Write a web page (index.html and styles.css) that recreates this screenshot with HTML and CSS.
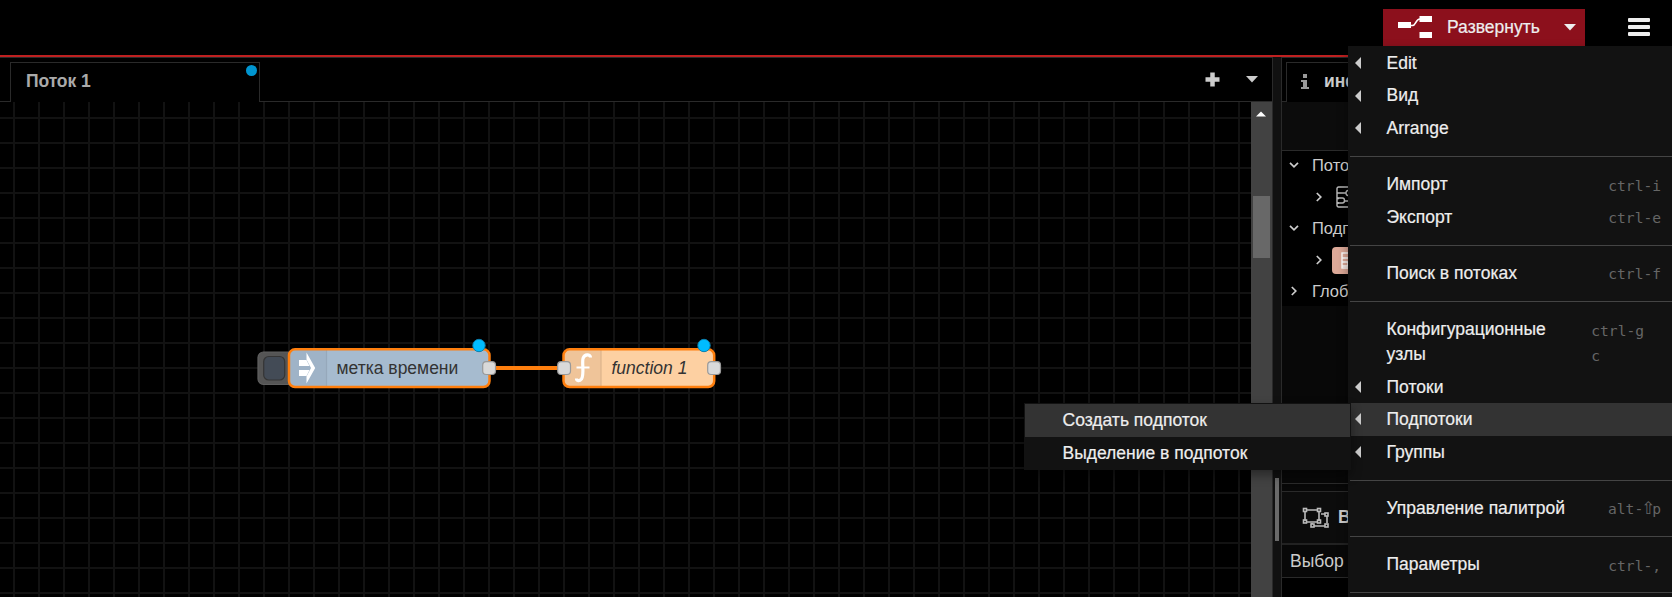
FILE: index.html
```html
<!DOCTYPE html>
<html lang="ru">
<head>
<meta charset="utf-8">
<title>Node-RED</title>
<link rel="stylesheet" href="styles.css">
</head>
<body>
<header class="header">
  <button class="deploy">
    <svg class="deploy-icon" width="34" height="23" viewBox="0 0 34 23"><g fill="#fff"><rect x="0" y="6" width="13" height="6"/><rect x="21.500" y="0" width="12.500" height="6"/><rect x="21.500" y="16" width="12.500" height="6"/></g><path d="M12 9.500h2.500C18 9.500 17.500 3 22 3" fill="none" stroke="#fff" stroke-width="1.600"/></svg>
    <span class="deploy-label">Развернуть</span>
    <svg class="deploy-caret" width="12" height="7"><path d="M0 0h12L6 6.500z" fill="#eee"/></svg>
  </button>
  <div class="burger"><i></i><i></i><i></i></div>
</header>
<main class="main">
  <section class="workspace">
    <div class="tabs">
      <div class="tab">Поток 1<span class="tab-dot"></span></div>
      <div class="tab-actions">
        <svg width="15" height="15"><path d="M7.500 .5v14M.5 7.500h14" stroke="#ccc" stroke-width="4.500"/></svg>
        <svg width="12" height="7"><path d="M0 0h12L6 6.500z" fill="#ccc"/></svg>
      </div>
    </div>
    <div class="canvas-row">
      <svg class="canvas" width="1251" height="495" viewBox="0 102 1251 495">
        <defs><pattern id="grid" x="13" y="117" width="25" height="25" patternUnits="userSpaceOnUse"><path d="M0 1h25M1 0v25" stroke="#121212" stroke-width="2"/></pattern></defs>
        <rect y="102" width="1251" height="495" fill="url(#grid)"/>
        <path d="M490 368h73" stroke="#ff7f0e" stroke-width="4"/>
        <g>
          <rect x="258" y="352" width="40" height="32.500" rx="5.500" fill="#555" stroke="#606060" stroke-width="1.200"/>
          <rect x="263.700" y="356.500" width="21" height="23.500" rx="5" fill="#434b56" stroke="#353535" stroke-width="1.200"/>
          <rect x="289" y="349.300" width="200.500" height="37.700" rx="6" fill="#a6bbcf"/>
          <path d="M295 349.300h31V387h-31a6 6 0 0 1-6-6v-25.700a6 6 0 0 1 6-6z" fill="#9fb3c7"/>
          <path d="M326.500 350v36" stroke="#96a8bb" stroke-width="1.200"/>
          <rect x="289" y="349.300" width="200.500" height="37.700" rx="6" fill="none" stroke="#ff7f0e" stroke-width="2.500"/>
          <path d="M306.500 352.500l8.700 15.500-8.700 15.500v-7l4.500-8.500-4.500-8.500z" fill="#fff"/>
          <path d="M299 360h7.500l3 6H299zM299 370h10.500l-3 6H299z" fill="#fff"/>
          <text class="node-label" x="336.500" y="374">метка времени</text>
          <rect class="port" x="482.700" y="361.700" width="12.800" height="12.800" rx="3.500"/>
          <circle class="changed" cx="479" cy="345.500" r="6.200"/>
        </g>
        <g>
          <rect x="563.500" y="349.300" width="150.700" height="37.700" rx="6" fill="#fdd0a2"/>
          <path d="M569.500 349.300H601V387h-31.500a6 6 0 0 1-6-6v-25.700a6 6 0 0 1 6-6z" fill="#efc499"/>
          <path d="M601 350v36" stroke="#dcb48c" stroke-width="1.200"/>
          <rect x="563.500" y="349.300" width="150.700" height="37.700" rx="6" fill="none" stroke="#ff7f0e" stroke-width="2.500"/>
          <path d="M590.500 357.500c0-3.500-6-4-7.500 1-1.200 5 1.500 16-1.500 20.500-2 2.500-5 2-5-.5" fill="none" stroke="#fff" stroke-width="3.200"/>
          <path d="M576.500 367.500h13" stroke="#fff" stroke-width="2"/>
          <text class="node-label italic" x="611.500" y="374">function 1</text>
          <rect class="port" x="557.700" y="361.700" width="12.800" height="12.800" rx="3.500"/>
          <rect class="port" x="707.700" y="361.700" width="12.800" height="12.800" rx="3.500"/>
          <circle class="changed" cx="704" cy="345.500" r="6.200"/>
        </g>
      </svg>
      <div class="scrollbar">
        <svg class="scroll-up" width="10" height="6"><path d="M0 5.500h10L5 .5z" fill="#fff"/></svg>
        <div class="thumb"></div>
      </div>
    </div>
  </section>
  <div class="separator"><div class="grip"></div></div>
  <aside class="sidebar">
    <div class="side-tabs">
      <div class="side-tab">
        <svg width="8" height="15"><path d="M2 0h4v4H2zM0 6h6v7h2v2H0v-2h2V8H0z" fill="#999"/></svg>
        <span>инф</span>
      </div>
    </div>
    <div class="side-toolbar"></div>
    <div class="tree">
      <div class="branch"><svg class="chev" width="10" height="6"><path d="M1 .8l4 4 4-4"/></svg>Пото</div>
      <div class="branch leaf"><svg class="chev" width="6" height="10"><path d="M.8 1l4 4-4 4"/></svg>
        <svg class="flow-icon" width="22" height="22"><g fill="none" stroke="#bbb" stroke-width="1.400"><rect x="1" y="1" width="20" height="20" rx="1.500"/><path d="M1 7h9M1 12.500h2M1 17h2M8.500 15h12"/><circle cx="12.500" cy="7" r="2.500"/><path d="M1 12h5.500q2 0 2 2.500t-2 2.500H1"/></g></svg></div>
      <div class="branch"><svg class="chev" width="10" height="6"><path d="M1 .8l4 4 4-4"/></svg>Подп</div>
      <div class="branch leaf"><svg class="chev" width="6" height="10"><path d="M.8 1l4 4-4 4"/></svg>
        <span class="subflow-icon"><svg width="18" height="18"><g fill="none" stroke="#fff" stroke-width="1.400"><rect x="2" y="1" width="15" height="15"/><path d="M2 6h11M2 10h6v4H2"/></g></svg></span></div>
      <div class="branch"><svg class="chev" width="6" height="10"><path d="M.8 1l4 4-4 4"/></svg>Глоб</div>
    </div>
    <div class="side-fill"></div>
    <div class="side-gap"></div>
    <div class="side-head">
      <svg width="28" height="22"><g fill="none" stroke="#bbb" stroke-width="1.600"><path d="M5 3h11M3 5v9M5 15h11M17 5v9M19 7h4M25 9v7M12 19h11M10 16v1"/><rect x="1.500" y="1.500" width="3" height="3"/><rect x="15.500" y="1.500" width="3" height="3"/><rect x="1.500" y="13" width="3" height="3"/><rect x="15.500" y="13" width="3" height="3"/><rect x="23" y="6" width="3" height="3"/><rect x="23" y="17" width="3" height="3"/><rect x="9" y="17" width="3" height="3"/></g></svg>
      <b>В</b>
    </div>
    <div class="side-row">Выбор</div>
    <div class="side-end"></div>
  </aside>
</main>
<nav class="menu">
  <div class="item sub">Edit</div>
  <div class="item sub">Вид</div>
  <div class="item sub">Arrange</div>
  <hr>
  <div class="item">Импорт<kbd>ctrl-i</kbd></div>
  <div class="item">Экспорт<kbd>ctrl-e</kbd></div>
  <hr>
  <div class="item">Поиск в потоках<kbd>ctrl-f</kbd></div>
  <hr>
  <div class="item"><span>Конфигурационные<br>узлы</span><kbd class="wrapped">ctrl-g<br>c</kbd></div>
  <div class="item sub">Потоки</div>
  <div class="item sub active">Подпотоки</div>
  <div class="item sub">Группы</div>
  <hr>
  <div class="item">Управление палитрой<kbd>alt-<span class="shift">⇧</span>p</kbd></div>
  <hr>
  <div class="item">Параметры<kbd>ctrl-,</kbd></div>
  <hr>
</nav>
<nav class="submenu">
  <div class="subitem active">Создать подпоток</div>
  <div class="subitem">Выделение в подпоток</div>
</nav>
</body>
</html>
```
FILE: styles.css
```css
* { box-sizing: border-box; }
body {
  margin: 0; width: 1672px; height: 597px; overflow: hidden; position: relative;
  display: flex; flex-direction: column;
  background: #000; color: #eee;
  font: 17.5px/25px "Liberation Sans", Arial, sans-serif;
}
svg { display: block; flex: none; }
.header {
  height: 57px; flex: none; border-bottom: 2px solid #c02020;
  display: flex; justify-content: flex-end; align-items: flex-start;
  padding: 9px 22px 0 0; gap: 43px;
}
.deploy {
  width: 202px; height: 37px; border: 0; padding: 0 9px 0 15px;
  display: flex; align-items: center; background: #8c101c; color: #eee;
  font: inherit; text-align: left;
}
.deploy-label { margin-left: 15px; }
.deploy-caret { margin-left: auto; }
.burger { width: 22px; padding-top: 9px; display: flex; flex-direction: column; gap: 3px; }
.burger i { height: 4px; background: #eee; border-radius: 1px; }
.main { flex: 1; display: flex; min-height: 0; }
.workspace { width: 1273px; flex: none; border: 1px solid #2a2a2a; border-width: 1px 1px 0 0; }
.tabs { height: 44px; display: flex; align-items: flex-end; justify-content: space-between; box-shadow: inset 0 -1px #2a2a2a; }
.tab {
  position: relative; width: 250px; height: 40px; margin-left: 10px; padding: 6px 15px;
  border: 1px solid #2a2a2a; border-bottom: 0; background: #000;
  font-weight: bold; color: #aaa; letter-spacing: -.1px;
}
.tab-dot { position: absolute; right: 2px; top: 2px; width: 11px; height: 11px; border-radius: 50%; background: #0095d0; }
.tab-actions { display: flex; align-items: center; gap: 26px; height: 44px; padding: 0 14px 2px 0; }
.canvas-row { display: flex; height: 495px; }
.scrollbar { width: 21px; background: #424242; padding: 9px 2px 0; }
.scroll-up { margin-left: 3px; }
.thumb { width: 17px; height: 62px; margin-top: 79px; background: #686868; }
.node-label { font: 17.5px "Liberation Sans", Arial, sans-serif; fill: #333; }
.italic { font-style: italic; }
.port { fill: #d9d9d9; stroke: #999; stroke-width: 1.2; }
.changed { fill: #00bcff; stroke: #0b7fae; stroke-width: 1; }
.separator { width: 8px; flex: none; background: #111; padding: 421px 0 0 2px; }
.grip { width: 4px; height: 63px; background: #6a6a6a; }
.sidebar {
  width: 67px; flex: none; overflow: hidden; border: 1px solid #2a2a2a; border-width: 1px 0 0 1px;
  display: flex; flex-direction: column; color: #ccc; background: #080808;
}
.side-tabs { height: 44px; flex: none; display: flex; align-items: flex-end; padding-left: 4px; background: #000; box-shadow: inset 0 -1px #2a2a2a; }
.side-tab {
  width: 250px; height: 40px; flex: none; border: 1px solid #2a2a2a; border-bottom: 0; background: #000;
  display: flex; align-items: center; gap: 15px; padding: 0 0 2px 14px; font-weight: bold;
}
.side-toolbar { height: 49px; flex: none; background: #0c0c0c; border-bottom: 1px solid #2a2a2a; }
.tree { flex: none; height: 155px; background: #000; font-size: 16.5px; }
.branch { height: 31.5px; padding: 0 0 3px 7px; display: grid; grid-template-columns: 23px 1fr; align-items: center; }
.chev { fill: none; stroke: #ccc; stroke-width: 1.7; }
.branch:last-child .chev { margin-left: 2px; }
.leaf { display: flex; padding: 0 0 2px 34px; gap: 14px; }
.subflow-icon { flex: none; width: 27px; height: 27px; border-radius: 4px; background: #dda998; padding: 5px 0 0 8px; margin-left: -4px; }
.side-fill { height: 177px; flex: none; }
.side-gap { height: 9px; flex: none; border: 1px solid #2a2a2a; border-width: 1px 0; }
.side-head { height: 53px; flex: none; border-bottom: 2px solid #222; background: #0c0c0c; display: flex; align-items: center; gap: 8px; padding-left: 20px; }
.side-row { height: 33px; flex: none; border-bottom: 1px solid #2a2a2a; padding: 4px 8px; }
.side-end { flex: 1; background: #000; }
.menu { position: absolute; left: 1348px; top: 46px; width: 324px; height: 560px; background: #121212; padding-top: 1px; box-shadow: 0 5px 10px rgba(0,0,0,.4); }
.menu, .submenu, .deploy { -webkit-text-stroke: .2px; }
.item { display: flex; justify-content: space-between; margin-left: 3px; padding: 3.75px 11px 3.75px 35.5px; }
.menu hr { height: 1px; margin: 11.25px 0 11.5px 2px; border: 0; background: #444; }
.item kbd { font: 14.6px/25px "DejaVu Sans Mono", monospace; color: #666; padding-top: .5px; height: 25px; -webkit-text-stroke: 0; }
.item .wrapped { padding-right: 17px; }
.shift { display: inline-block; width: 9px; font-size: 17px; line-height: 1; font-family: "DejaVu Sans", sans-serif; text-indent: -2px; }
.item.sub { position: relative; }
.item.sub::before {
  content: ""; position: absolute; left: 4px; top: 10px;
  border: 6px solid transparent; border-left: 0; border-right-color: #ccc;
}
.active { background: #333; }
.submenu { position: absolute; left: 1024px; top: 403px; width: 327px; height: 67px; padding: 1px; background: #121212; box-shadow: 0 5px 10px rgba(0,0,0,.4); }
.subitem { height: 33px; padding: 3.5px 0 0 37.5px; }
```
